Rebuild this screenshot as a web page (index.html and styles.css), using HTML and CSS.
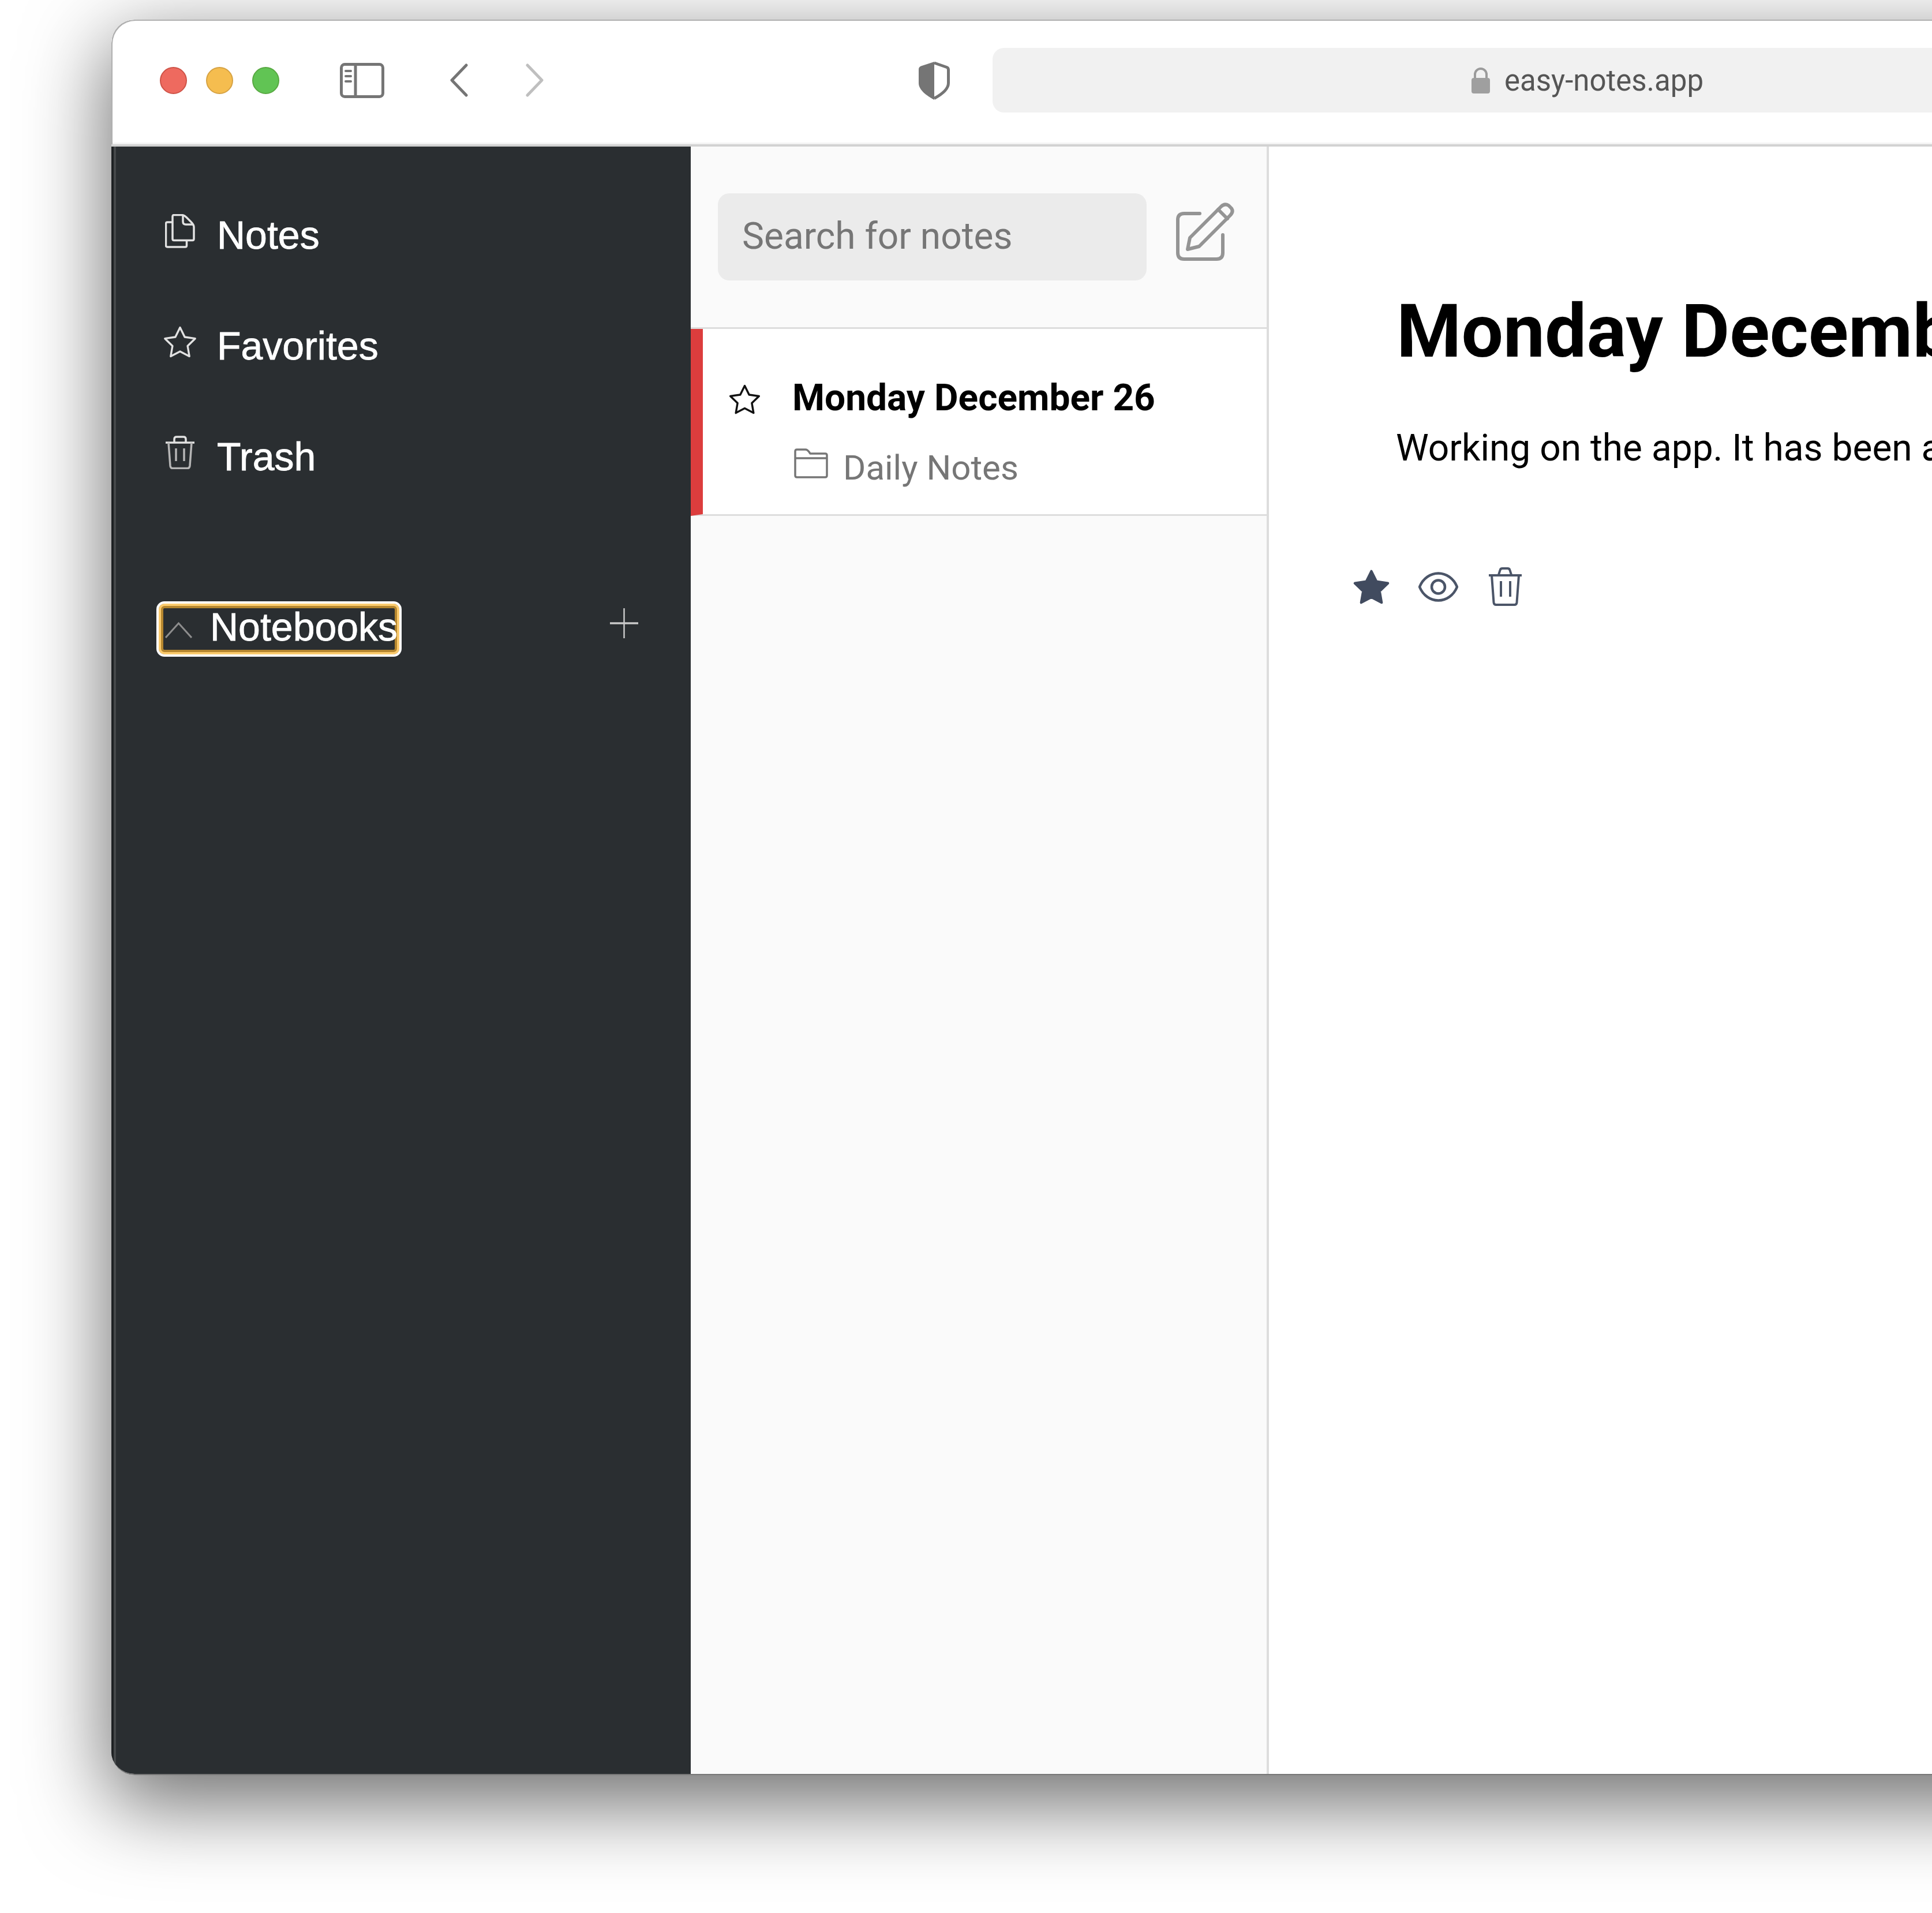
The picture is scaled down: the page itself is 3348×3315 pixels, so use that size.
FILE: index.html
```html
<!DOCTYPE html>
<html lang="en">
<head>
  <meta charset="UTF-8" />
  <title>Easy Notes</title>
  <link rel="stylesheet" href="styles.css">
</head>
<body>
  <div class="window">
    <header class="toolbar">
      <div class="lights">
        <span class="light red"></span>
        <span class="light yellow"></span>
        <span class="light green"></span>
      </div>
      <svg class="tb-sidebar" width="77" height="61" viewBox="0 0 77 61" fill="none" stroke="#757575" stroke-width="5">
        <rect x="2.500" y="2.500" width="72" height="56" rx="6" />
        <path d="M27 2v56" />
        <path d="M10 14h9M10 23h9M10 32h9" stroke-width="4" stroke-linecap="round" />
      </svg>
      <svg class="tb-back" width="31" height="58" viewBox="0 0 31 58" fill="none" stroke="#757575" stroke-width="5" stroke-linecap="round" stroke-linejoin="round">
        <path d="M28 3 3 29l25 26" />
      </svg>
      <svg class="tb-forward" width="31" height="58" viewBox="0 0 31 58" fill="none" stroke="#bfbfbf" stroke-width="5" stroke-linecap="round" stroke-linejoin="round">
        <path d="m3 3 25 26L3 55" />
      </svg>
      <svg class="tb-shield" width="54" height="67" viewBox="0 0 54 67">
        <path d="M27 1 4 8.500Q0 10 0 14v24c0 12 14 22 27 29Z" fill="#757575" />
        <path d="M27 3l21.500 7.500q3 1 3 4.500v23c0 11-12.500 20-24.500 26.500" fill="none" stroke="#757575" stroke-width="5" stroke-linejoin="round" />
      </svg>
      <div class="address">
        <svg width="32" height="46" viewBox="0 0 32 46">
          <path d="M6 20v-7a10 10 0 0 1 20 0v7" fill="none" stroke="#9b9b9b" stroke-width="4" />
          <rect x="0" y="19" width="32" height="27" rx="4" fill="#9f9f9f" />
        </svg>
        <span>easy-notes.app</span>
      </div>
    </header>

    <div class="columns">
      <aside class="sidebar">
        <nav class="nav">
          <a class="nav-row">
            <span class="nav-icon">
              <svg width="52" height="59" viewBox="0 0 52 59" fill="none" stroke="#e2e2e2" stroke-width="3.500" stroke-linejoin="round">
                <path d="M13 14H4q-2.500 0-2.500 2.500v38Q1.500 57 4 57h31q2.500 0 2.500-2.500V46" />
                <path d="M13 4q0-2.500 2.500-2.500H29q4 0 8 4l8 8q5 5 5 9V43q0 2.500-2.500 2.500h-32Q13 45.500 13 43Z" />
                <path d="M31 2v11q0 5 5 5h13" />
              </svg>
            </span>
            <span>Notes</span>
          </a>
          <a class="nav-row">
            <span class="nav-icon">
              <svg width="58" height="55" viewBox="1 1 22 21" fill="none" stroke="#e2e2e2" stroke-width="1.300" stroke-linejoin="round">
                <polygon points="12 2 15.090 8.260 22 9.270 17 14.140 18.180 21.020 12 17.770 5.820 21.020 7 14.140 2 9.270 8.910 8.260" />
              </svg>
            </span>
            <span>Favorites</span>
          </a>
          <a class="nav-row">
            <span class="nav-icon">
              <svg width="52" height="58" viewBox="0 0 52 58" fill="none" stroke="#e2e2e2" stroke-width="3.500" stroke-linejoin="round">
                <path d="M1 12h50" />
                <path d="M16 11V6q0-4 4-4h12q4 0 4 4v5" />
                <path d="m6 12 3 40q.5 4.500 4 4.500h26q3.500 0 4-4.500l3-40" stroke="#b5b5b5" />
                <path d="M19 22v22M33 22v22" stroke="#b5b5b5" />
              </svg>
            </span>
            <span>Trash</span>
          </a>
        </nav>
        <div class="notebooks">
          <button class="notebooks-btn">
            <svg width="47" height="28" viewBox="0 0 47 28" fill="none" stroke="#8d8d8d" stroke-width="3">
              <path d="M1 27 23.500 2 46 27" />
            </svg>
            <span>Notebooks</span>
          </button>
          <svg class="plus" width="49" height="52" viewBox="0 0 49 52" stroke="#c9c9c9">
            <path d="M24.500 0v52" stroke-width="2.500" />
            <path d="M0 26h49" stroke-width="3.500" />
          </svg>
        </div>
      </aside>

      <section class="list">
        <div class="list-head">
          <input class="search" type="text" placeholder="Search for notes" />
          <svg class="edit" width="102" height="101" viewBox="0 0 102 101" fill="none" stroke="#949494" stroke-width="6" stroke-linecap="round" stroke-linejoin="round">
            <path d="M41 19H14Q3 19 3 30v57q0 11 11 11h56q11 0 11-11V56" />
            <path d="m20 81 4-20L78 7q6-6 13-2l5 5q4 6-2 12L40 76Z" />
            <path d="m73 12 16 16" />
          </svg>
        </div>
        <article class="note active">
          <svg class="note-star" width="57" height="52" viewBox="1 1 22 21" fill="none" stroke="#111" stroke-width="1.400" stroke-linejoin="round">
            <polygon points="12 2 15.090 8.260 22 9.270 17 14.140 18.180 21.020 12 17.770 5.820 21.020 7 14.140 2 9.270 8.910 8.260" />
          </svg>
          <div class="note-body">
            <div class="note-title">Monday December 26</div>
            <div class="note-book">
              <svg width="59" height="52" viewBox="0 0 59 52" fill="none" stroke="#767676" stroke-width="3.500" stroke-linejoin="round">
                <path d="M2 10V5q0-3 3-3h15q3 0 6 4l2 3h26q3 0 3 3v35q0 3-3 3H5q-3 0-3-3Z" />
                <path d="M2 17h55" />
              </svg>
              <span>Daily Notes</span>
            </div>
          </div>
        </article>
      </section>

      <main class="editor">
        <h1>Monday December 26</h1>
        <p>Working on the app. It has been a</p>
        <div class="actions">
          <span class="action">
            <svg width="63" height="60" viewBox="1 1 22 21" fill="#414b5f" stroke="#414b5f" stroke-width="1.500" stroke-linejoin="round">
              <polygon points="12 2 15.090 8.260 22 9.270 17 14.140 18.180 21.020 12 17.770 5.820 21.020 7 14.140 2 9.270 8.910 8.260" />
            </svg>
          </span>
          <span class="action">
            <svg width="69" height="52" viewBox="0 0 69 52" fill="none" stroke="#4b5568" stroke-width="4.500">
              <path d="M2 26C8 11 21 2.500 34.500 2.500S61 11 67 26C61 41 48 49.500 34.500 49.500S8 41 2 26Z" />
              <circle cx="34.500" cy="26" r="11.500" />
            </svg>
          </span>
          <span class="action">
            <svg width="59" height="67" viewBox="0 0 59 67" fill="none" stroke="#4b5568" stroke-width="4" stroke-linejoin="round">
              <path d="M1 14h57" />
              <path d="m18 13 2.500-8q.8-3 4-3h9q3.200 0 4 3l2.500 8" />
              <path d="m6 14 3.500 47q.5 4 4 4h32q3.500 0 4-4L53 14" />
              <path d="M22 24v27M38 24v27" />
            </svg>
          </span>
        </div>
      </main>
    </div>
  </div>
</body>
</html>
```

FILE: styles.css
```css
* {
  box-sizing: border-box;
  margin: 0;
  padding: 0;
}
html,
body {
  height: 100%;
  overflow: hidden;
}
body {
  padding: 34px 0 0 193px;
  background: #fff;
  font-family: Roboto, Arial, sans-serif;
}
.window {
  display: flex;
  flex-direction: column;
  width: 3900px;
  height: 3042px;
  border-radius: 40px;
  border-bottom: 2px solid #777;
  overflow: hidden;
  background: #fff;
}
/* overflow:hidden does not cut the element's own shadow, so it sits on a wrapper-free box */
body::before {
  content: "";
  position: absolute;
  left: 193px;
  top: 34px;
  width: 3900px;
  height: 3042px;
  border-radius: 40px;
  box-shadow: 0 44px 140px 8px rgba(0, 0, 0, 0.56);
  z-index: -1;
}

/* browser toolbar */
.toolbar {
  display: flex;
  align-items: center;
  flex: none;
  height: 220px;
  padding: 0 0 6px 84px;
  border-radius: 40px 0 0 0;
  border-bottom: 4px solid #d2d2d2;
  box-shadow: inset 2px 2px 0 #b0b0b0, inset 0 -3px 0 #f3f3f3;
}
.lights {
  display: flex;
  gap: 33px;
}
.light {
  width: 47px;
  height: 47px;
  border-radius: 50%;
  border: 2px solid;
}
.red {
  background: #ee6a5f;
  border-color: #ce5347;
}
.yellow {
  background: #f5bd4f;
  border-color: #d6a243;
}
.green {
  background: #61c454;
  border-color: #58a942;
}
.tb-sidebar {
  margin-left: 105px;
}
.tb-back {
  margin-left: 114px;
}
.tb-forward {
  margin-left: 100px;
}
.tb-shield {
  margin-left: 650px;
}
.address {
  display: flex;
  align-items: center;
  justify-content: center;
  gap: 25px;
  flex: none;
  width: 2062px;
  height: 112px;
  margin-left: 74px;
  border-radius: 20px;
  background: #f1f1f1;
  color: #555;
  font-size: 51px;
}

.columns {
  display: flex;
  flex: 1;
  min-height: 0;
}

/* left sidebar */
.sidebar {
  flex: none;
  width: 1004px;
  padding: 57px 91px 0 86px;
  border-left: 4px solid #1e2123;
  box-shadow: inset 4px 0 0 #45484a;
  background: #2a2e31;
  color: #fff;
  font-family: "Liberation Sans", Arial, sans-serif;
  font-size: 68px;
  line-height: 66px;
  -webkit-text-stroke: 0.8px #fff;
}
.nav-row {
  display: flex;
  align-items: center;
  height: 192px;
}
.nav-icon {
  display: flex;
  justify-content: center;
  width: 58px;
  margin: 0 35px 14px 0;
}
.notebooks {
  display: flex;
  align-items: center;
  justify-content: space-between;
  margin-top: 155px;
  margin-left: -12px;
}
.notebooks-btn {
  display: flex;
  align-items: center;
  width: 425px;
  height: 96px;
  padding: 0 0 8px 11px;
  border: 4px solid #fff;
  border-radius: 14px;
  box-shadow: inset 0 0 0 4px #fbcb6e, inset 0 0 0 8px #b5862f;
  background: none;
  color: #fff;
  font: inherit;
  white-space: nowrap;
}
.notebooks-btn svg {
  margin: 12px 31px 0 0;
}
.plus {
  margin-bottom: 20px;
}

/* note list */
.list {
  flex: none;
  width: 1002px;
  border-right: 4px solid #ddd;
  background: #fafafa;
}
.list-head {
  display: flex;
  gap: 51px;
  height: 316px;
  padding: 81px 0 0 47px;
  border-bottom: 3px solid #ddd;
}
.search {
  width: 743px;
  height: 151px;
  padding: 0 42px 3px;
  border: none;
  border-radius: 20px;
  background: #ebebeb;
  font-family: Roboto, Arial, sans-serif;
  font-size: 64px;
}
.search::placeholder {
  color: #767676;
  opacity: 1;
}
.edit {
  margin-top: 16px;
}
.note {
  display: flex;
  height: 324px;
  border-bottom: 3px solid #ddd;
  background: #fff;
}
.note.active {
  border-left: 21px solid #dc3d3d;
}
.note-star {
  flex: none;
  margin: 96px 54px 0 44px;
}
.note-body {
  padding-top: 82px;
}
.note-title {
  font-size: 64px;
  font-weight: 700;
  line-height: 76px;
  color: #000;
  white-space: nowrap;
}
.note-book {
  display: flex;
  align-items: center;
  gap: 26px;
  margin-top: 48px;
  font-size: 60px;
  line-height: 70px;
  color: #767676;
}
.note-book svg {
  margin: 0 0 16px 3px;
}

/* editor */
.editor {
  flex: 1;
  padding: 243px 0 0 222px;
  white-space: nowrap;
}
.editor h1 {
  margin-left: -1px;
  font-size: 128.5px;
  font-weight: 700;
  line-height: 154px;
  color: #000;
}
.editor p {
  margin: 89px 0 0 -2px;
  font-size: 64px;
  line-height: 74px;
  color: #000;
}
.actions {
  display: flex;
  align-items: center;
  gap: 46px;
  margin: 169px 0 0 -80px;
}
.action {
  display: flex;
  justify-content: center;
  width: 70px;
}
```
